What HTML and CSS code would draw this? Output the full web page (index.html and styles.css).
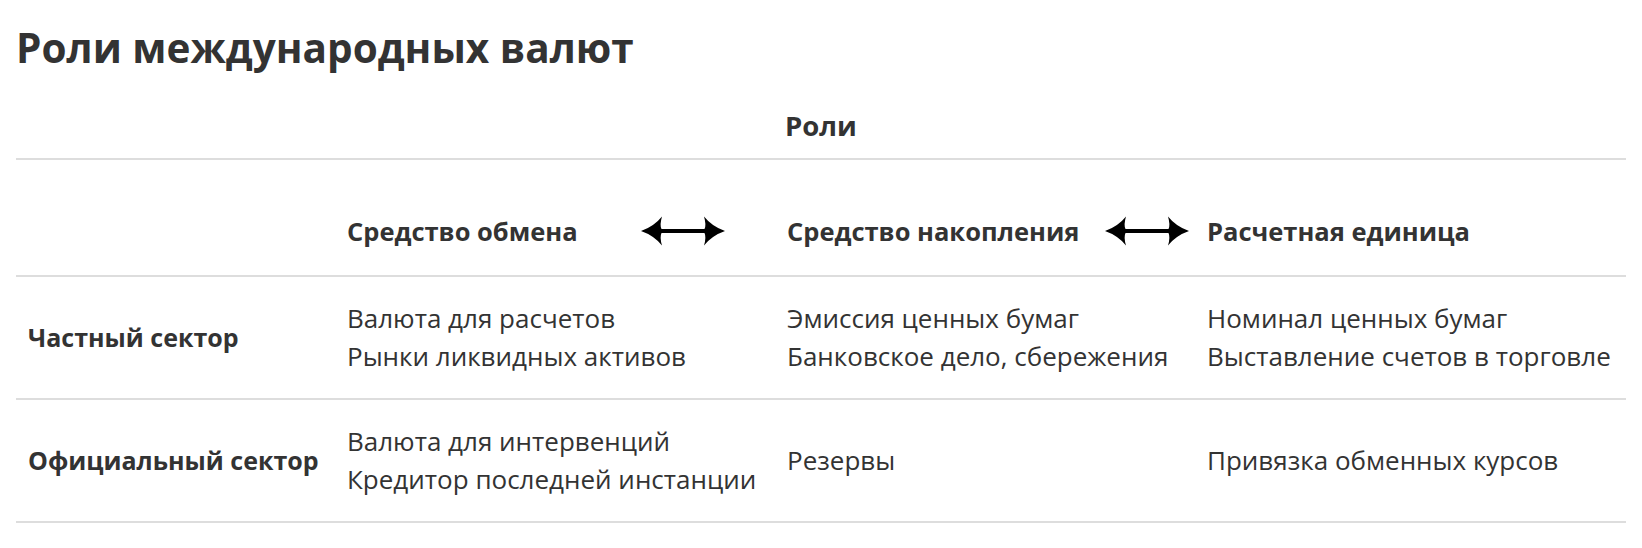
FILE: index.html
```html
<!DOCTYPE html>
<html lang="ru">
<head>
<meta charset="utf-8">
<title>Роли международных валют</title>
<link rel="stylesheet" href="styles.css">
</head>
<body>
<div class="page">
  <h1 class="title">Роли международных валют</h1>
  <div class="table">
    <div class="roles-head">Роли</div>
    <div class="row head-row">
      <div class="cell"></div>
      <div class="cell th th-1"><span>Средство обмена</span>
        <svg class="arrow" viewBox="0 0 84 30" aria-hidden="true"><path d="M0 15 Q13 10.5 21 0.5 Q18.5 9 20.5 13 L63.5 13 Q65.5 9 63 0.5 Q71 10.5 84 15 Q71 19.5 63 29.5 Q65.5 21 63.5 17 L20.5 17 Q18.5 21 21 29.5 Q13 19.5 0 15 Z"/></svg>
      </div>
      <div class="cell th th-2"><span>Средство накопления</span>
        <svg class="arrow" viewBox="0 0 84 30" aria-hidden="true"><path d="M0 15 Q13 10.5 21 0.5 Q18.5 9 20.5 13 L63.5 13 Q65.5 9 63 0.5 Q71 10.5 84 15 Q71 19.5 63 29.5 Q65.5 21 63.5 17 L20.5 17 Q18.5 21 21 29.5 Q13 19.5 0 15 Z"/></svg>
      </div>
      <div class="cell th"><span>Расчетная единица</span></div>
    </div>
    <div class="row body-row">
      <div class="cell label">Частный сектор</div>
      <div class="cell">Валюта для расчетов<br>Рынки ликвидных активов</div>
      <div class="cell">Эмиссия ценных бумаг<br>Банковское дело, сбережения</div>
      <div class="cell">Номинал ценных бумаг<br>Выставление счетов в торговле</div>
    </div>
    <div class="row body-row last">
      <div class="cell label">Официальный сектор</div>
      <div class="cell">Валюта для интервенций<br>Кредитор последней инстанции</div>
      <div class="cell">Резервы</div>
      <div class="cell">Привязка обменных курсов</div>
    </div>
  </div>
</div>
</body>
</html>
```

FILE: styles.css
```css
html, body {
  margin: 0;
  padding: 0;
  background: #ffffff;
}

body {
  font-family: "Open Sans", "Noto Sans", "Liberation Sans", sans-serif;
  color: #333333;
}

.page {
  padding: 24px 16px 0 16px;
}

.title {
  margin: 0;
  font-size: 40.5px;
  line-height: 48px;
  font-weight: 700;
  color: #333333;
}

.table {
  margin-top: 36px;
}

.roles-head {
  text-align: center;
  font-size: 27.5px;
  line-height: 36px;
  font-weight: 700;
  padding-bottom: 14px;
}

.row {
  display: grid;
  grid-template-columns: 319px 440px 420px 1fr;
  border-top: 2px solid #dddddd;
}

.row.last {
  border-bottom: 2px solid #dddddd;
}

.cell {
  padding-left: 12px;
  font-size: 26px;
  line-height: 38px;
  white-space: nowrap;
}

.head-row {
  padding: 53px 0 26px 0;
}

.th {
  display: flex;
  align-items: center;
  justify-content: space-between;
  font-size: 25.5px;
  font-weight: 700;
  line-height: 36px;
}

.th-1 {
  padding-right: 50px;
}

.th-2 {
  padding-right: 6px;
}

.arrow {
  width: 84px;
  height: 30px;
  fill: #000000;
  flex: none;
}

.body-row {
  padding: 22px 0 23px 0;
}

.body-row .cell {
  align-self: center;
}

.label {
  font-size: 25px;
  font-weight: 700;
}
```
